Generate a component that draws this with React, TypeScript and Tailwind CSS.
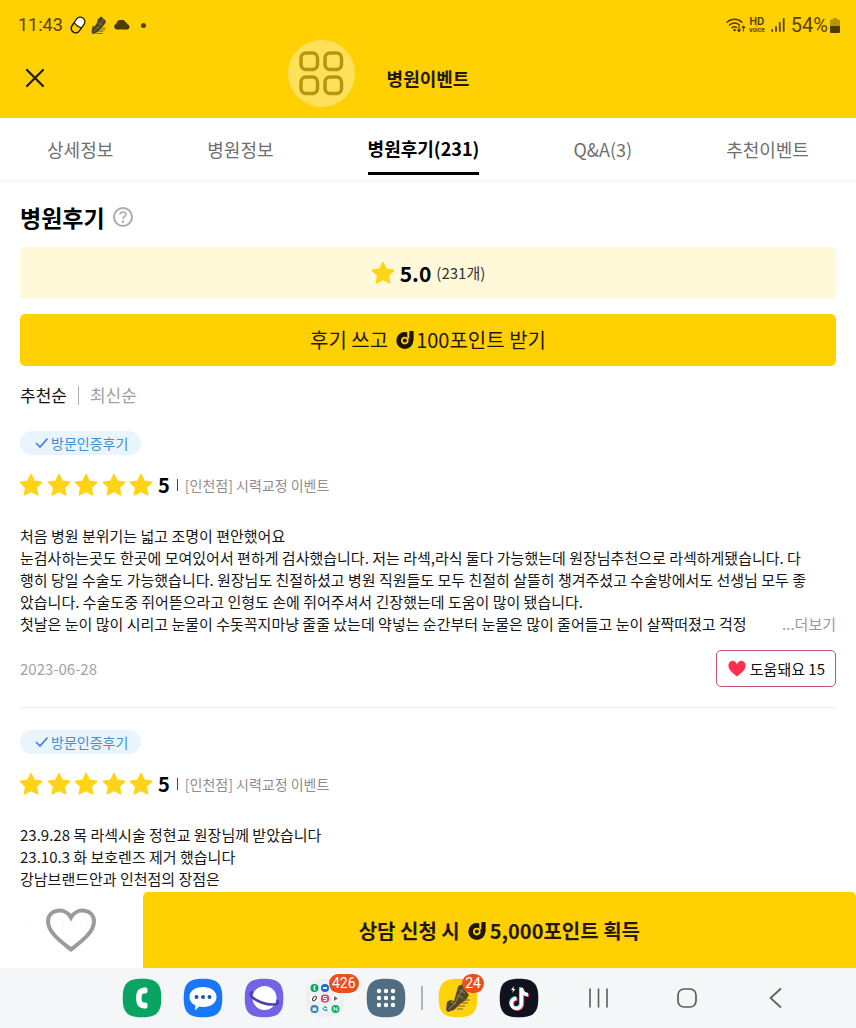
import { useState, type ReactNode } from "react"

const tabs = ["상세정보", "병원정보", "병원후기(231)", "Q&A(3)", "추천이벤트"]

interface Review {
  id: number
  score: number
  event: string
  lines: string[]
  date: string
  helpful: number
}

const reviews: Review[] = [
  {
    id: 1,
    score: 5,
    event: "[인천점] 시력교정 이벤트",
    lines: [
      "처음 병원 분위기는 넓고 조명이 편안했어요",
      "눈검사하는곳도 한곳에 모여있어서 편하게 검사했습니다. 저는 라섹,라식 둘다 가능했는데 원장님추천으로 라섹하게됐습니다. 다",
      "행히 당일 수술도 가능했습니다. 원장님도 친절하셨고 병원 직원들도 모두 친절히 살뜰히 챙겨주셨고 수술방에서도 선생님 모두 좋",
      "았습니다. 수술도중 쥐어뜯으라고 인형도 손에 쥐어주셔서 긴장했는데 도움이 많이 됐습니다.",
      "첫날은 눈이 많이 시리고 눈물이 수돗꼭지마냥 줄줄 났는데 약넣는 순간부터 눈물은 많이 줄어들고 눈이 살짝떠졌고 걱정",
    ],
    date: "2023-06-28",
    helpful: 15,
  },
  {
    id: 2,
    score: 5,
    event: "[인천점] 시력교정 이벤트",
    lines: [
      "23.9.28 목 라섹시술 정현교 원장님께 받았습니다",
      "23.10.3 화 보호렌즈 제거 했습니다",
      "강남브랜드안과 인천점의 장점은",
    ],
    date: "2023-10-04",
    helpful: 9,
  },
]

function Star({ className }: { className?: string }) {
  return (
    <svg viewBox="0 0 24 24" className={className} aria-hidden="true">
      <path
        d="M12 1.600l3.200 6.700 7.400 1-5.400 5.100 1.400 7.400L12 18.200l-6.600 3.600 1.400-7.400L1.400 9.300l7.400-1z"
        fill="#ffd416"
        stroke="#ffd416"
        strokeWidth="1.600"
        strokeLinejoin="round"
      />
    </svg>
  )
}

function PointMark() {
  return (
    <svg viewBox="0 0 18 18" className="size-[18px]" aria-hidden="true">
      <circle cx="8.800" cy="9.400" r="8.500" fill="#1d1500" />
      <path d="M11.300 0v7.500h2.400V0z" fill="#ffd103" />
      <path d="M13.400 0h4.200v9.500h-4.200z" fill="#1d1500" />
      <circle cx="8.800" cy="9.600" r="2.900" fill="none" stroke="#ffd103" strokeWidth="1.800" />
      <circle cx="8.800" cy="9.600" r="1.400" fill="#1d1500" />
    </svg>
  )
}

function Shoe({ className }: { className?: string }) {
  return (
    <svg viewBox="0 0 26 30" className={className} aria-hidden="true">
      <path
        d="M15 1c2-1 4 0 4 2l4 3c2 2 1 5-1 7l-4 5-5 6-6 4-5 1-1-4 1-8 5-2 3-5 1-5z"
        fill="#4d4424"
      />
      <path d="M4 25l8-7 5-7 3-7M8 17l6 3M12 11l6 3" fill="none" stroke="#968447" strokeWidth="1" />
      <path d="M13 25h7M14 22h9M16 19h8M9 28h10" stroke="#5f5325" strokeWidth="1.200" />
    </svg>
  )
}

function StatusBar() {
  return (
    <div className="flex h-[50px] items-center justify-between pr-4 pl-[18px] text-[#5b4100]">
      <div className="flex items-center">
        <span className="font-[Roboto,sans-serif] text-lg leading-6">11:43</span>
        <svg viewBox="0 0 18 20" className="ml-1.5 h-5 w-[18px]" aria-label="알림">
          <g transform="rotate(35 9 10)">
            <rect x="4.500" y="1.500" width="9" height="17" rx="4.500" fill="#ffd103" stroke="#221800" strokeWidth="1.500" />
            <path d="M5.200 10V6a3.800 3.800 0 0 1 7.600 0v4z" fill="#fff" />
            <path d="M4.500 10c2 1.600 7 1.600 9 0" fill="none" stroke="#221800" strokeWidth="1.200" />
          </g>
        </svg>
        <Shoe className="ml-1 h-[19px] w-4" />
        <svg viewBox="0 0 18 10" className="ml-1.5 h-2.5 w-[18px]" aria-hidden="true">
          <path d="M3.500 9.500a3 3 0 0 1-.3-5.800A5 5 0 0 1 12.400 2a3 3 0 0 1 2 2.300 2.700 2.700 0 0 1 .3 5.200z" fill="#4f3b00" />
        </svg>
        <span className="ml-2.5 size-[5px] rounded-full bg-[#5b4100]" />
      </div>
      <div className="flex items-center">
        <svg viewBox="0 0 20 16" className="h-4 w-5" fill="none" stroke="currentColor" strokeWidth="1.500" strokeLinecap="round" aria-hidden="true">
          <path d="M1 5.200a11 11 0 0 1 15 0M3.500 8a7.500 7.500 0 0 1 10 0M6 10.700a4 4 0 0 1 4.500-.3" />
          <circle cx="8.600" cy="13" r=".6" fill="currentColor" />
          <path d="M13 9v5.500M11.600 13l1.400 1.600 1.400-1.600M17.500 14V9.200M16.100 10.700l1.400-1.600 1.400 1.600" strokeWidth="1.200" />
        </svg>
        <span className="ml-[3px] flex flex-col items-center font-[Inter,sans-serif] font-bold">
          <span className="text-[10px] leading-[10px]">HD</span>
          <span className="text-[6px] leading-[8px]">voice</span>
        </span>
        <svg viewBox="0 0 14 14" className="ml-1.5 size-3.5" stroke="currentColor" strokeWidth="1.800" strokeLinecap="round" aria-hidden="true">
          <path d="M1.200 12v1M5 9V13M8.800 5V13M12.700 1v12" />
        </svg>
        <span className="ml-1.5 font-[Roboto,sans-serif] text-xl leading-6">54%</span>
        <svg viewBox="0 0 10 15" className="ml-0.5 h-[15px] w-2.5" aria-hidden="true">
          <path d="M3 0h4v1.500h2A1 1 0 0 1 10 2.500V8H0V2.500a1 1 0 0 1 1-1h2z" fill="#b89300" />
          <path d="M0 8h10v6a1 1 0 0 1-1 1H1a1 1 0 0 1-1-1z" fill="#4f3b00" />
        </svg>
      </div>
    </div>
  )
}

function ReviewItem({ review }: { review: Review }) {
  return (
    <article className="border-b border-[#eeeef0] pb-5">
      <span className="inline-flex h-6 items-center gap-[3px] rounded-full bg-[#eaf4fd] pr-[13px] pl-[15px] text-sm leading-6 text-[#4390cf]">
        <svg viewBox="0 0 13 12" className="h-3 w-[13px]" fill="none" stroke="#3f82d0" strokeWidth="1.600" aria-hidden="true">
          <path d="M1 6l4 4 7.500-8.500" />
        </svg>
        방문인증후기
      </span>
      <div className="mt-[18px] flex h-6 items-center">
        <div className="flex w-[132px] justify-between" role="img" aria-label={`${review.score}점`}>
          {Array.from({ length: review.score }, (_, i) => (
            <Star key={i} className="size-6 -mx-px" />
          ))}
        </div>
        <strong className="ml-1.5 text-xl leading-6 font-bold">{review.score}</strong>
        <span className="mx-[7px] h-3 w-px bg-[#444]" />
        <span className="text-sm leading-6 text-[#8e8e8e]">{review.event}</span>
      </div>
      <div className="relative mt-7 text-[15px] leading-[22px] text-[#161616]">
        {review.lines.map((line) => (
          <p key={line} className="overflow-hidden whitespace-nowrap">
            {line}
          </p>
        ))}
        {review.lines.length > 3 && (
          <button type="button" className="absolute right-0 bottom-0 bg-white pl-3 text-[#999]">
            ...더보기
          </button>
        )}
      </div>
      <div className="mt-[15px] flex items-center justify-between">
        <time className="text-[15px] leading-[22px] text-[#a3a3a3]">{review.date}</time>
        <button
          type="button"
          className="flex h-[37px] items-center gap-[3px] rounded-[5px] border border-[#c0536f] px-2.5 text-[15px] leading-[22px] text-[#111]"
        >
          <svg viewBox="0 0 20 18" className="h-[18px] w-5" aria-hidden="true">
            <path d="M10 16.500C7 14 1.500 10.400 1.500 6a4.300 4.300 0 0 1 8.500-1.600A4.300 4.300 0 0 1 18.500 6c0 4.400-5.500 8-8.500 10.500z" fill="#ff2f4b" />
          </svg>
          도움돼요 {review.helpful}
        </button>
      </div>
    </article>
  )
}

function AppIcon({ label, fill, badge, children }: { label: string; fill: string; badge?: string; children: ReactNode }) {
  return (
    <button type="button" aria-label={label} className="relative size-10 shrink-0">
      <svg viewBox="0 0 40 40" className="size-10">
        <path d="M20 .7C34.500.7 39.300 5.500 39.300 20S34.500 39.300 20 39.300.7 34.500.7 20 5.500.7 20 .7z" fill={fill} />
        {children}
      </svg>
      {badge && (
        <span className="absolute -top-1 left-1/2 ml-1 flex h-[19px] min-w-[22px] items-center justify-center rounded-full bg-[#e9501f] px-[3px] font-[Roboto,sans-serif] text-sm leading-[19px] text-white">
          {badge}
        </span>
      )}
    </button>
  )
}

function SystemNav() {
  return (
    <nav className="flex h-[60px] items-center justify-center bg-[#f5f6f8] pl-[62px]">
      <div className="flex gap-[21px]">
        <AppIcon label="전화" fill="#08a562">
          <path d="M18.500 10.500c-3.500 1.800-4.300 5-4.300 9.500s.8 7.700 4.300 9.500c1.800 1 5.200 1.400 6.200.8.700-.5.800-1.500.8-3.300 0-2-.8-2.500-3.200-2.500-2.300 0-2.700-1.800-2.700-4.500s.4-4.500 2.700-4.500c2.400 0 3.200-.5 3.200-2.500 0-1.800-.1-2.800-.8-3.300-1-.6-4.400-.2-6.200.8z" fill="#fff" />
        </AppIcon>
        <AppIcon label="메시지" fill="#1877f8">
          <path d="M20 9c8 0 13.500 4 13.500 10S28 29 20 29c-1.400 0-2.600-.1-3.700-.4L12.500 32c-.3.200-.7 0-.6-.4l.6-4.200C8.800 25.700 6.500 22.800 6.500 19 6.500 13 12 9 20 9z" fill="#fff" />
          <g fill="#1e55a8">
            <circle cx="13.500" cy="19" r="2" />
            <circle cx="20" cy="19" r="2" />
            <circle cx="26.500" cy="19" r="2" />
          </g>
        </AppIcon>
        <AppIcon label="인터넷" fill="#7363e6">
          <circle cx="20.500" cy="20" r="12" fill="#fff" />
          <path d="M8 14c-2 1.500-2 3 0 5 4 4 14 8 22 7.500 3 0 4.500-1 3.500-3.500" fill="none" stroke="#4d3fae" strokeWidth="2.600" strokeLinecap="round" />
        </AppIcon>
        <AppIcon label="폴더" fill="#edeff1" badge="426">
          <circle cx="9.500" cy="10" r="4" fill="#0ca765" />
          <path d="M10.500 8c-2 .2-2 3.800 0 4" fill="none" stroke="#fff" strokeWidth="1.300" />
          <circle cx="20" cy="10" r="4" fill="#1c68ce" />
          <path d="M18 10h4" stroke="#fff" strokeWidth="1.800" />
          <circle cx="9.500" cy="20.500" r="4" fill="#fff" />
          <ellipse cx="9.500" cy="20.500" rx="1.500" ry="2.700" transform="rotate(35 9.500 20.500)" fill="none" stroke="#443b30" />
          <rect x="16" y="16.500" width="8" height="8" rx="3" fill="#e5426f" />
          <path d="M21.800 18.500h-3.300v2h3v2h-3.300" fill="none" stroke="#fff" />
          <circle cx="30.500" cy="20.500" r="4" fill="#fff" />
          <path d="M29 18l4 2.500-4 2.500z" fill="#6b6b6b" />
          <circle cx="9.500" cy="31" r="4" fill="#327ebd" />
          <path d="M7.500 29.500h4v3.500h-4z" fill="#d5eafb" />
          <circle cx="20" cy="31" r="4" fill="#fff" />
          <path d="M18 29.500c0 3 3 4 4.500 2M19 28.500l3 1.500" fill="none" stroke="#28a9bb" strokeWidth="1.400" />
          <circle cx="30.500" cy="31" r="4" fill="#11ad68" />
          <path d="M29 32.700v-3.400l3 3.400v-3.400" fill="none" stroke="#fff" />
        </AppIcon>
        <AppIcon label="앱스" fill="#506d82">
          {[13, 20, 27].map((cy) =>
            [13, 20, 27].map((cx) => <circle key={`${cx}-${cy}`} cx={cx} cy={cy} r="2.200" fill="#fff" />)
          )}
        </AppIcon>
      </div>
      <span className="mx-[15px] h-6 w-0.5 bg-[#b0b2b5]" />
      <div className="flex gap-[21px]">
        <AppIcon label="만보기" fill="#ffd20c" badge="24">
          <path d="M20 9c1-2 4-3 6-2l2 6 3 4-3 5-6 4-6 6-6 2-2-2 1-8 3-2 4 1 2-7z" fill="#50462c" />
          <path d="M11 31l6-6 4-8 4-6M13 24l5 2M19 17l6 3M21 12l6 3" fill="none" stroke="#9c8a4c" />
          <path d="M20 28h7M22 25h8M19 31h6M25 22h7" stroke="#796725" />
        </AppIcon>
        <AppIcon label="틱톡" fill="#10121d">
          <g fill="none" strokeWidth="3.500">
            <path d="M22.500 10v15.500a5 5 0 1 1-5-5M22.500 11c.5 3.500 3 5.500 6.500 5.800" stroke="#25e5df" transform="translate(-.8 -.7)" />
            <path d="M22.500 10v15.500a5 5 0 1 1-5-5M22.500 11c.5 3.500 3 5.500 6.500 5.800" stroke="#fb2757" transform="translate(1 .8)" />
            <path d="M22.500 10v15.500a5 5 0 1 1-5-5M22.500 11c.5 3.500 3 5.500 6.500 5.800" stroke="#fff" />
          </g>
          <path d="M15 8l-3 4h2l-1 3 3.500-4h-2z" fill="#fff" />
        </AppIcon>
      </div>
      <div className="ml-[39px] flex gap-[49px] text-[#5c5d60]">
        <button type="button" aria-label="최근 앱" className="size-10">
          <svg viewBox="0 0 40 40" className="size-10" stroke="currentColor" strokeWidth="1.600">
            <path d="M12 10.500v19M20.500 10.500v19M29 10.500v19" />
          </svg>
        </button>
        <button type="button" aria-label="홈" className="size-10">
          <svg viewBox="0 0 40 40" className="size-10" fill="none" stroke="currentColor" strokeWidth="1.700">
            <rect x="11" y="11" width="18" height="18" rx="6" />
          </svg>
        </button>
        <button type="button" aria-label="뒤로" className="size-10">
          <svg viewBox="0 0 40 40" className="size-10" fill="none" stroke="currentColor" strokeWidth="1.700">
            <path d="M25 10.500L14.500 20 25 29.500" />
          </svg>
        </button>
      </div>
    </nav>
  )
}

export default function App() {
  const [activeTab, setActiveTab] = useState(2)
  const [liked, setLiked] = useState(false)

  return (
    <div className="relative flex h-screen flex-col overflow-hidden bg-white font-['Noto_Sans_CJK_KR',sans-serif] text-black">
      <header className="relative bg-[#ffd103]">
        <StatusBar />
        <div className="grid h-[68px] grid-cols-[1fr_auto_1fr] items-center px-6 pb-3">
          <button type="button" aria-label="닫기" className="size-[22px]">
            <svg viewBox="0 0 22 22" className="size-[22px]" stroke="#241900" strokeWidth="2.200" strokeLinecap="round">
              <path d="M3 3l16 16M19 3L3 19" />
            </svg>
          </button>
          <h1 className="text-lg leading-7 font-bold text-[#241900]">병원이벤트</h1>
        </div>
        <button type="button" aria-label="보조 메뉴" className="absolute top-10 left-[288px] size-[67px] rounded-full bg-[#ffe05a]">
          <svg viewBox="0 0 67 67" className="size-[67px]" fill="none" stroke="#b6960c" strokeWidth="3.500">
            <rect x="13" y="13" width="16.500" height="16.500" rx="5" />
            <rect x="37" y="13" width="16.500" height="16.500" rx="5" />
            <rect x="13" y="37" width="16.500" height="16.500" rx="5" />
            <rect x="37" y="37" width="16.500" height="16.500" rx="5" />
          </svg>
        </button>
      </header>

      <div role="tablist" className="flex justify-around border-b-4 border-[#f8f9fa] pb-1 text-lg leading-7">
        {tabs.map((tab, i) => (
          <button
            key={tab}
            type="button"
            role="tab"
            aria-selected={i === activeTab}
            onClick={() => setActiveTab(i)}
            className={
              i === activeTab
                ? "border-b-3 border-black pt-4 pb-2.5 font-bold text-black"
                : "border-b-3 border-transparent pt-[17px] pb-[9px] text-[#6f6f6f]"
            }
          >
            {tab}
          </button>
        ))}
      </div>

      <main className="min-h-0 flex-1 overflow-hidden px-5 pt-[18px]">
        <div className="flex items-center gap-2">
          <h2 className="text-[23px] leading-8 font-bold">병원후기</h2>
          <button type="button" aria-label="도움말" className="flex size-5 items-center justify-center rounded-full border-2 border-[#aaa] text-[#aaa]">
            <svg viewBox="0 0 12 14" className="h-3.5 w-3" fill="none" stroke="currentColor" strokeWidth="1.500">
              <path d="M3 4.500C3 1 9.200 1.200 9 4.500 8.900 6.500 6 6.500 6 9.200" />
              <circle cx="6" cy="11.700" r=".5" fill="currentColor" />
            </svg>
          </button>
        </div>

        <div className="mt-3.5 flex h-[52px] items-center justify-center rounded-[5px] bg-[#fff8d9]">
          <Star className="size-6" />
          <strong className="ml-[5px] text-[21px] leading-7 font-bold">5.0</strong>
          <span className="ml-[5px] text-[15px] leading-[22px] text-[#333]">(231개)</span>
        </div>

        <button type="button" className="mt-[15px] flex h-[52px] w-full items-center justify-center rounded-[5px] bg-[#ffd103] text-xl leading-7 text-[#241900]">
          <span className="mr-2">후기 쓰고</span>
          <PointMark />
          <span className="ml-0.5">100포인트 받기</span>
        </button>

        <div className="mt-[17px] flex items-center text-[17px] leading-6">
          <button type="button" className="text-[#111]">추천순</button>
          <span className="mx-[11px] h-[19px] w-px bg-[#b0b0b0]" />
          <button type="button" className="text-[#a0a0a0]">최신순</button>
        </div>

        <div className="mt-[23px] flex flex-col gap-[21px]">
          {reviews.map((review) => (
            <ReviewItem key={review.id} review={review} />
          ))}
        </div>
      </main>

      <footer className="absolute inset-x-0 bottom-0">
        <div className="flex h-[76px]">
          <div className="flex w-1/6 items-center justify-center bg-white/97">
            <button type="button" aria-label="찜하기" aria-pressed={liked} onClick={() => setLiked(!liked)}>
              <svg viewBox="0 0 52 46" className="h-[46px] w-[52px]" fill={liked ? "#ff2f4b" : "none"} stroke="#9b9b9b" strokeWidth="4">
                <path d="M26 42.500C18 36 3 26 3 14.500 3 2 20-.5 26 10.500 32-.5 49 2 49 14.500 49 26 34 36 26 42.500z" />
              </svg>
            </button>
          </div>
          <button type="button" className="flex flex-1 items-center justify-center rounded-t-[5px] bg-[#ffd103] pt-0.5 text-xl leading-7 font-bold text-[#241900]">
            <span className="mr-2">상담 신청 시</span>
            <PointMark />
            <span className="ml-1">5,000포인트 획득</span>
          </button>
        </div>
        <SystemNav />
      </footer>
    </div>
  )
}
